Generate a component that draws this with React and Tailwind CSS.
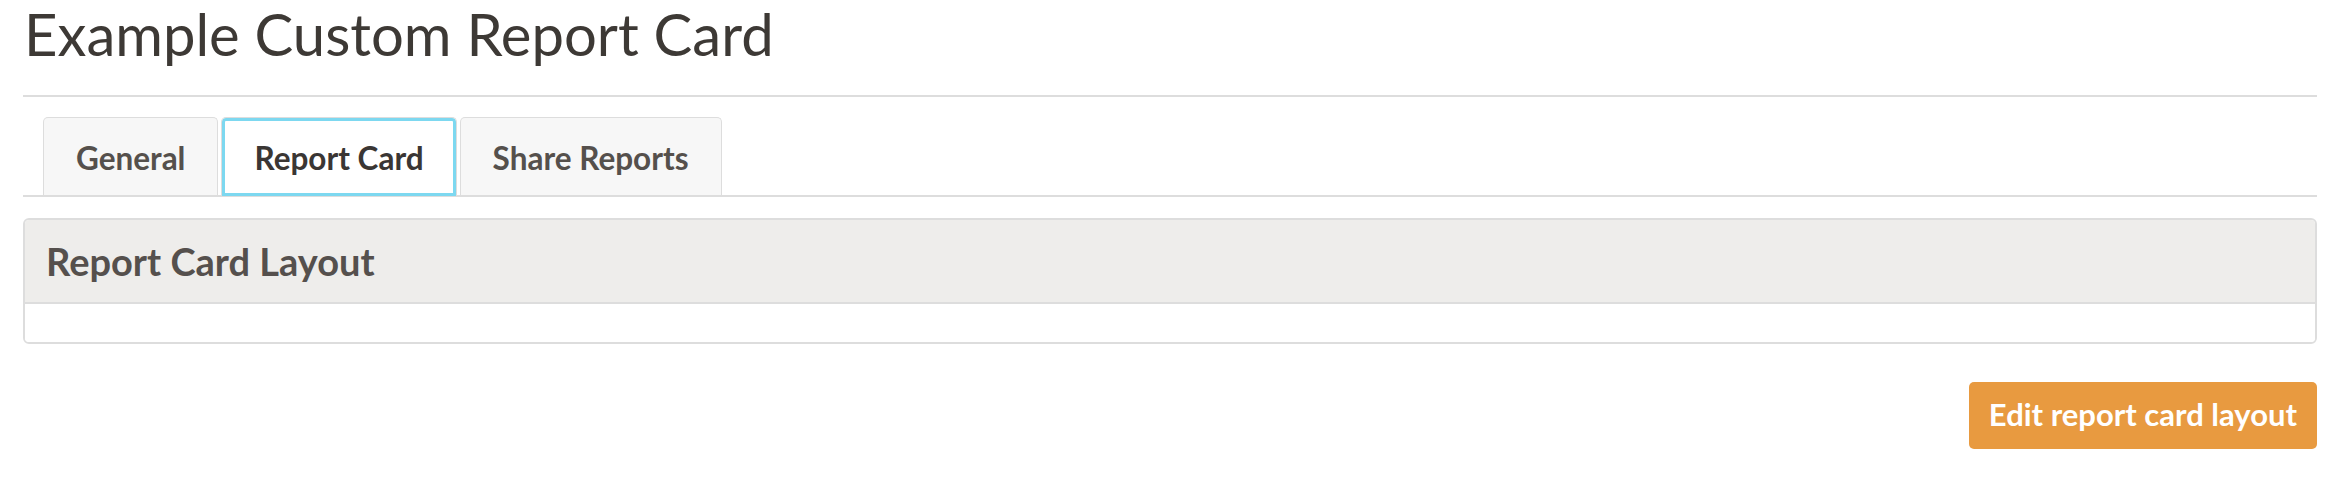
import React from "react";

export default function App() {
  const font = { fontFamily: "Lato, 'Open Sans', sans-serif" };
  return (
    <div className="min-h-[486px] bg-white pl-[23px] pr-[13px]" style={font}>
      <h1 className="mt-[5px] pl-[1px] text-[58px] leading-none font-normal text-[#3d3935]">
        Example Custom Report Card
      </h1>
      <div className="mt-[32px] h-[2px] bg-[#dddddd]" />
      <div className="mt-[20px] flex gap-[3px] border-b-2 border-[#dddddd] pl-[20px]">
        <div className="flex h-[78px] items-center rounded-t-[5px] border border-b-0 border-[#dddddd] bg-[#f7f7f7] px-[32px] pt-[4px] text-[31.5px] font-bold text-[#55504c]">
          General
        </div>
        <div className="-mb-[1px] flex h-[79px] items-center rounded-t-[5px] border border-b-0 border-[#dddddd] bg-white px-[32px] pt-[4px] text-[31.5px] font-bold text-[#3a3634] shadow-[inset_0_0_0_3px_#7dd8f0]">
          Report Card
        </div>
        <div className="flex h-[78px] items-center rounded-t-[5px] border border-b-0 border-[#dddddd] bg-[#f7f7f7] px-[32px] pt-[4px] text-[31.5px] font-bold text-[#55504c]">
          Share Reports
        </div>
      </div>
      <div className="mt-[21px] overflow-hidden rounded-[6px] border-2 border-[#dddddd]">
        <div className="flex h-[84px] items-center border-b-2 border-[#dddddd] bg-[#eeedeb] px-[21px] text-[38px] font-bold text-[#55504d]">
          Report Card Layout
        </div>
        <div className="h-[38px] bg-white" />
      </div>
      <div className="mt-[38px] flex justify-end">
        <button className="flex h-[67px] items-center rounded-[5px] bg-[#e89a40] px-[20px] pb-[3px] text-[31px] font-bold text-white">
          Edit report card layout
        </button>
      </div>
    </div>
  );
}
